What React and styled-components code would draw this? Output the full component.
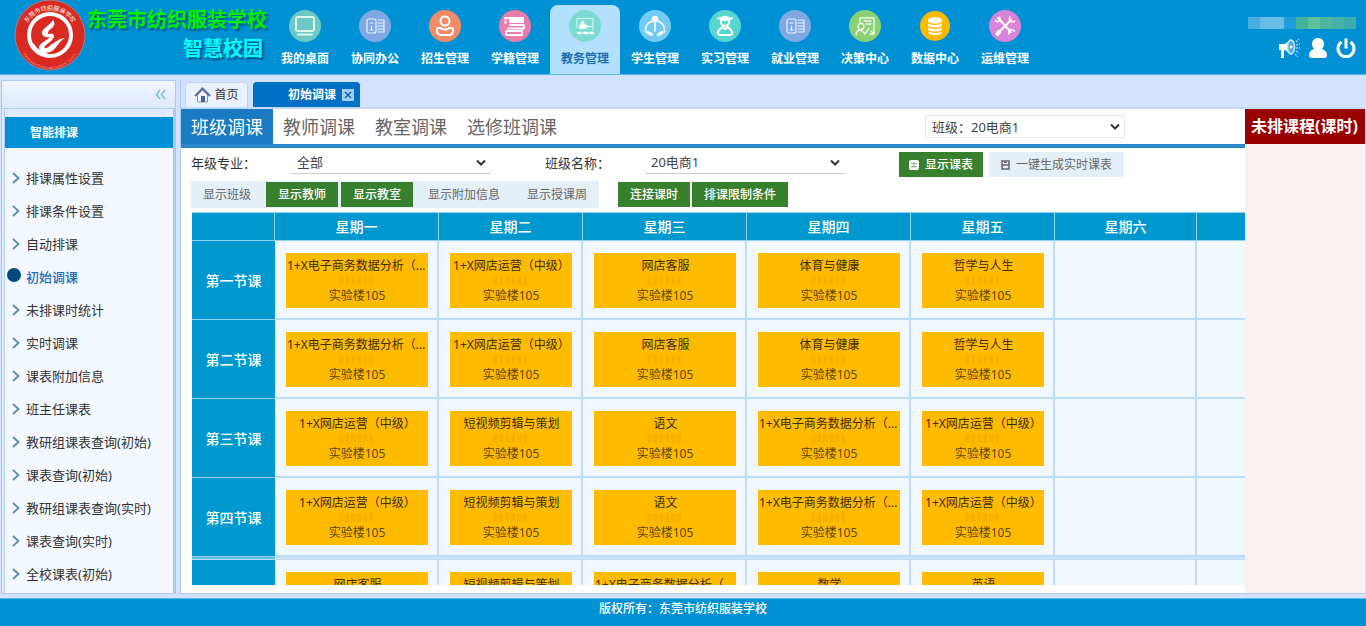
import React from 'react';
import styled, { createGlobalStyle, css } from 'styled-components';

const GlobalStyle = createGlobalStyle`
  *, *::before, *::after { box-sizing: border-box; }
  body {
    margin: 0;
    background: #d3e3ff;
    color: #333;
    font: 12px/16px "Noto Sans", "Noto Sans CJK SC", sans-serif;
  }
  button, select { font: inherit; color: inherit; margin: 0; }
  a { color: inherit; text-decoration: none; }
  ul { list-style: none; margin: 0; padding: 0; }
`;

const Shell = styled.div`
  display: flex;
  flex-direction: column;
  height: 100vh;
  overflow: hidden;
`;

/* Header */

const Header = styled.header`
  display: flex;
  flex: none;
  height: 75px;
  background: #0091d5;
  border-bottom: 1px solid #5cb8ea;
  color: #fff;
`;

const Brand = styled.div`
  display: flex;
  flex: none;
  width: 270px;
  padding-left: 14px;
`;

const BrandText = styled.div`
  display: flex;
  flex-direction: column;
  align-items: flex-end;
  margin-left: 1px;
  padding-top: 5px;
  font-size: 20px;
  line-height: 29px;
  white-space: nowrap;
  text-shadow: 2px 2px 2px rgba(0, 40, 80, 0.6);
`;

const SchoolName = styled.strong`
  color: #00f000;
`;

const SystemName = styled.strong`
  margin-right: 4px;
  color: #0ff;
`;

const Nav = styled.nav`
  display: flex;
  flex: 1;
  padding-top: 5px;
`;

const NavItem = styled.a`
  display: flex;
  flex: none;
  flex-direction: column;
  align-items: center;
  width: 70px;
  padding-top: 5px;
  border-radius: 8px 8px 0 0;
  background: ${(p) => (p.$active ? '#b3e0ff' : 'transparent')};
  color: ${(p) => (p.$active ? '#1c6cb0' : '#fff')};
  font-weight: bold;

  span { margin-top: 9px; }
`;

const UserArea = styled.div`
  display: flex;
  flex: none;
  flex-direction: column;
  align-items: flex-end;
  gap: 8px;
  padding: 17px 10px 0 0;
`;

const UserMask = styled.div`
  width: 108px;
  height: 12px;
  background: linear-gradient(90deg, #48b0e0 0 12px, #68bce6 12px 36px, #229cda 36px 48px, #45b39c 48px 60px, #60c29a 60px 72px, #50b79d 72px 84px, #46b1a5 84px 96px, #3eacae 96px);
`;

const UserActions = styled.div`
  display: flex;
  gap: 8px;
`;

const IconButton = styled.button`
  display: block;
  padding: 0;
  border: 0;
  background: none;
  color: #fff;
  cursor: pointer;

  svg { display: block; }
`;

/* Body */

const Body = styled.div`
  display: flex;
  flex: 1;
  gap: 4px;
  min-height: 0;
  padding: 5px 1px 4px;
`;

const Sidebar = styled.aside`
  display: flex;
  flex: none;
  flex-direction: column;
  width: 175px;
  border: 1px solid #a9c8f2;
  background: #e0ebff;
`;

const SidebarTop = styled.div`
  display: flex;
  flex: none;
  align-items: center;
  justify-content: flex-end;
  height: 28px;
  padding-right: 9px;
  border-bottom: 1px solid #a9c8f2;
  background: linear-gradient(#f0f5ff, #deeaff);
  color: #7cbcec;
`;

const SidebarPanel = styled.div`
  flex: 1;
  min-height: 0;
  margin: 0 0 0 2px;
  padding-top: 8px;
  border-left: 1px solid #b7d0f3;
  border-right: 2px solid #b0caef;
  overflow: hidden;
  display: flex;
  flex-direction: column;
`;

const MenuTitle = styled.h2`
  flex: none;
  margin: 0;
  padding-left: 25px;
  background: #0091d5;
  color: #fff;
  font-size: 12px;
  line-height: 31px;
`;

const Menu = styled.ul`
  flex: 1;
  && { padding-top: 13px; }
  background: #f3f8ff;
`;

const MenuLink = styled.a`
  display: flex;
  align-items: center;
  height: 33px;
  font-size: 13px;
  white-space: nowrap;
  color: ${(p) => (p.$active ? '#1c6cb8' : '#333')};
  font-weight: ${(p) => (p.$active ? 500 : 400)};
`;

const MenuMark = styled.span`
  display: flex;
  flex: none;
  justify-content: center;
  width: 21px;
  color: #5b8ba5;
`;

const Dot = styled.i`
  width: 14px;
  height: 14px;
  margin: 0 4px 3px 0;
  border-radius: 50%;
  background: #004a80;
`;

const Main = styled.main`
  display: flex;
  flex: 1;
  flex-direction: column;
  min-width: 0;
  border-left: 1px solid #a9c8f2;
`;

const PageTabs = styled.div`
  display: flex;
  flex: none;
  gap: 5px;
  height: 29px;
  padding: 2px 0 0 4px;
  border-bottom: 2px solid #c2daf8;
`;

const PageTab = styled.div`
  display: flex;
  align-items: center;
  justify-content: ${(p) => (p.$active ? 'flex-end' : 'center')};
  gap: ${(p) => (p.$active ? 6 : 3)}px;
  width: ${(p) => (p.$active ? 107 : 63)}px;
  padding-right: ${(p) => (p.$active ? 5 : 0)}px;
  border-radius: 4px 4px 0 0;
  background: ${(p) => (p.$active ? '#0070c4' : '#ebf2ff')};
  border: 1px solid ${(p) => (p.$active ? '#0070c4' : '#bdd4f5')};
  border-bottom: 0;
  color: ${(p) => (p.$active ? '#fff' : '#333')};
  font-weight: ${(p) => (p.$active ? 700 : 400)};
`;

const Content = styled.div`
  display: flex;
  flex: 1;
  min-height: 0;
  border-bottom: 1px solid #b0caef;
`;

const Workspace = styled.section`
  display: flex;
  flex: 1;
  flex-direction: column;
  min-width: 0;
  padding-bottom: 8px;
  background: #fff;
`;

const ModeBar = styled.div`
  display: flex;
  flex: none;
  align-items: center;
  height: 39px;
  border-bottom: 4px solid #2b87c8;
`;

const ModeTab = styled.button`
  align-self: stretch;
  padding: 0 10px;
  border: 0;
  background: ${(p) => (p.$active ? '#1a7ac2' : 'none')};
  color: ${(p) => (p.$active ? '#fff' : '#666')};
  font-size: 18px;
  cursor: pointer;
`;

const SelectBox = styled.div`
  position: relative;
  width: 200px;
  color: #444;
  font-size: 13px;

  svg {
    position: absolute;
    top: 8px;
    right: 5px;
    pointer-events: none;
  }
`;

const Select = styled.select`
  display: block;
  width: 100%;
  height: 23px;
  padding: 0 24px 0 6px;
  border: 1px solid #dfeaf3;
  border-radius: 0;
  background: transparent;
  appearance: none;

  ${(p) => p.$underline && css`
    border-width: 0 0 1px;
    border-color: #ccc;
  `}
`;

const ClassPicker = styled.div`
  margin: 0 120px 0 auto;
`;

const Filters = styled.div`
  display: flex;
  flex: none;
  align-items: flex-start;
  margin-top: 3px;
  padding-left: 10px;
`;

const Field = styled.div`
  display: flex;
  align-items: center;
  margin-right: 54px;

  label {
    width: 100px;
    font-size: 13px;
  }
`;

const ButtonGroup = styled.div`
  display: flex;
  gap: ${(p) => p.$gap || 0}px;
  padding: 1px 0;
  background: ${(p) => (p.$tinted ? '#e4eff8' : 'none')};
`;

const Button = styled.button`
  display: flex;
  align-items: center;
  justify-content: center;
  gap: 6px;
  height: 25px;
  padding: 0 ${(p) => p.$pad || 12}px;
  border: 0;
  background: ${(p) => (p.$on ? '#37802e' : '#e4eff8')};
  color: ${(p) => (p.$on ? '#fff' : '#666')};
  font-weight: ${(p) => (p.$on ? 500 : 400)};
  white-space: nowrap;
  cursor: pointer;
`;

const Options = styled(Filters)`
  gap: 19px;
`;

const TableScroll = styled.div`
  flex: 1;
  min-height: 0;
  margin: 4px 0 0 11px;
  overflow: hidden;
`;

const Timetable = styled.table`
  width: 1147px;
  table-layout: fixed;
  border-spacing: 0;

  th, td { padding: 0; }
`;

const DayHead = styled.th`
  height: 29px;
  border: solid #8fd3f0;
  border-width: 1px 1px 1px 0;
  background: #0099cf;
  color: #fff;
  font-size: 14px;
  font-weight: 500;
`;

const PeriodHead = styled.th`
  && { padding-top: 2px; }
  height: 79px;
  border-bottom: 1px solid #8fd3f0;
  background: #0099cf;
  color: #fff;
  font-size: 14px;
  font-weight: 500;
`;

const Slot = styled.td`
  && { padding: 12px 9px 10px 11px; }
  height: 79px;
  border-right: 2px solid #bcdcf6;
  border-bottom: 2px solid #bcdcf6;
  background: #f0f7ff;
  vertical-align: top;
`;

const BreakCell = styled.td`
  height: 3px;
  border-bottom: 1px solid #bcdcf6;
  background: ${(p) => (p.$head ? '#5fc0e6' : '#cfe4f9')};
`;

const Lesson = styled.div`
  display: flex;
  flex-direction: column;
  align-items: center;
  height: 55px;
  padding: 5px 0;
  background: #fb0;
  line-height: 15px;
`;

const LessonName = styled.div`
  max-width: 100%;
  padding-left: 1px;
  overflow: hidden;
  color: #3c2d00;
  text-overflow: ellipsis;
  white-space: nowrap;
`;

const TeacherMask = styled.div`
  width: 36px;
  height: 9px;
  margin: 3px 0;
  opacity: 0.4;
  background: repeating-linear-gradient(90deg, #eda900 0 4px, #fab600 4px 7px, #e5a400 7px 10px, #fb0 10px 12px);
`;

const Room = styled.div`
  color: #5c4600;
`;

const Unscheduled = styled.section`
  flex: none;
  width: 120px;
  background: #f9f0f0;

  h2 {
    height: 35px;
    margin: 0;
    padding: 0 6px;
    background: #900;
    color: #fff;
    font-size: 16px;
    line-height: 35px;
    white-space: nowrap;
  }
`;

const Footer = styled.footer`
  flex: none;
  height: 28px;
  background: #0091d5;
  border-top: 1px solid #5cb8ea;
  color: #fff;
  font-weight: 500;
  line-height: 19px;
  text-align: center;
`;

/* Drawings */

const Logo = () => (
  <svg width="72" height="72" viewBox="0 0 72 72" role="img" aria-label="校徽">
    <defs>
      <path id="ringTop" d="M10 36a26 26 0 0 1 52 0" />
      <path id="ringBottom" d="M5 38a31 31 0 0 0 62 0" />
    </defs>
    <circle cx="36" cy="35" r="35" fill="#d92a22" stroke="#a8808c" strokeWidth="1" />
    <circle cx="36" cy="35" r="21" fill="#d92a22" stroke="#fff" strokeWidth="4" />
    <text fill="#fff" fontSize="6">
      <textPath href="#ringTop" startOffset="50%" textAnchor="middle">东莞市纺织服装学校</textPath>
    </text>
    <text fill="#f3a9a0" fontSize="3">
      <textPath href="#ringBottom" startOffset="50%" textAnchor="middle">DONGGUAN TEXTILE AND GARMENT SCHOOL</textPath>
    </text>
    <path fill="#fff" d="M39 20c-3 5-10 8-11 12-1 4 4 6 8 5-4 4-11 6-11 11 0 5 9 6 13 3 5-3 5-8 13-13-5 0-9 4-13 6-3 2-5 5-7 4-2-2 3-4 6-7 3-3 4-5 2-7-2-1-5 1-5-1 0-4 10-6 5-13z" />
    <path fill="none" stroke="#fff" strokeWidth="2" d="M19 44c3 6 8 9 14 10" />
  </svg>
);

const stroke = { fill: 'none', stroke: '#fff', strokeWidth: 1.6, strokeLinecap: 'round', strokeLinejoin: 'round' };

const Newspaper = (
  <g {...stroke} strokeWidth="1.2" opacity="0.85">
    <rect x="8" y="9" width="9" height="14" rx="2" />
    <path d="M11 13h3M12.500 16v4M11 20h3M19 10h6v12h-6M19 13h6M19 16h6M19 19h6" />
  </g>
);

const navIcons = {
  desktop: (
    <g {...stroke} stroke="#d9fbef" strokeWidth="2">
      <rect x="7" y="7" width="18" height="14" rx="2" />
      <path d="M9 24.500h14" />
    </g>
  ),
  news: Newspaper,
  recruit: (
    <g {...stroke} strokeWidth="2">
      <circle cx="16" cy="11" r="4.500" />
      <path d="M9 18h2.500c2 2 7 2 9 0H23c2 0 1 7-2 7H11c-3 0-4-7-2-7z" />
    </g>
  ),
  books: (
    <g {...stroke} strokeWidth="1.800">
      <path d="M11 8h13v4H11z" fill="#fff" />
      <path d="M6 8h5M6.500 8v5M11 15h14M9 18.500h16M25 15v3.500M7 21h16v4H7M7 21v4" />
    </g>
  ),
  teach: (
    <g {...stroke} strokeWidth="1.200">
      <path d="M8 18V8.500h16V20" opacity="0.6" />
      <path d="M13.500 11c-1 3-3 4-3 7.500h6c0-3.500-2-4.500-3-7.500z" fill="#fff" />
      <path d="M17 15l2 2 4-1" />
      <path d="M9 23h3M15 23h3M21 23h3" strokeWidth="2.500" />
    </g>
  ),
  student: (
    <g {...stroke}>
      <circle cx="16" cy="9" r="2.500" fill="#fff" />
      <path d="M16 12v9M13 11c-5 2-7 6-6.500 11M19 11c5 2 7 6 6.500 11" />
      <path d="M9 22.500l3.500 2M23 22.500l-3.500 2" strokeWidth="3" />
    </g>
  ),
  graduate: (
    <g {...stroke}>
      <path d="M9 8.500l7-2 7 2-7 2z" fill="#fff" />
      <path d="M12 10v2c0 5 8 5 8 0v-2M13 17l3 2 3-2" strokeWidth="2" />
      <path d="M13 18c-4 1-6 7-2 7h10c4 0 2-6-2-7" strokeWidth="2" />
    </g>
  ),
  decision: (
    <g {...stroke} strokeWidth="1.300" opacity="0.9">
      <path d="M11 12V8h14v16h-4M15 11h7M17 14h5M25 24l-3-3" />
      <circle cx="12" cy="16.500" r="3" />
      <path d="M7 25c0-3 2-5 5-5l4 4 4-6" />
    </g>
  ),
  data: (
    <g>
      <path fill="#fff" d="M9 10v12c0 4 14 4 14 0V10z" />
      <ellipse cx="16" cy="10" rx="7" ry="2.800" fill="#fff" />
      <path fill="none" stroke="#fcb900" strokeWidth="1.300" d="M9 12c1 3 13 3 14 0M9 16c1 3 13 3 14 0M9 20c1 3 13 3 14 0" />
    </g>
  ),
  tools: (
    <g {...stroke} strokeWidth="2">
      <path d="M9 8l13 14M22 10L10 22" />
      <path d="M10 22l-1.500 2" strokeWidth="4" />
      <path d="M6.500 10.500c2 3 6 0 4-3.500M21 7c-2 3 2 7 4.500 4M20 24c-1-3 3-6 5.500-3" strokeWidth="1.500" />
    </g>
  ),
};

const NavIcon = ({ name, color }) => (
  <svg width="32" height="32" viewBox="0 0 32 32" aria-hidden="true">
    <circle cx="16" cy="16" r={name === 'data' ? 15 : 16} fill={color} />
    {navIcons[name]}
  </svg>
);

const Caret = () => (
  <svg width="10" height="8" viewBox="0 0 10 8" aria-hidden="true">
    <path d="M1 1.500l4 4 4-4" fill="none" stroke="#333" strokeWidth="2" />
  </svg>
);

const MenuArrow = () => (
  <svg width="8" height="12" viewBox="0 0 8 12" aria-hidden="true">
    <path d="M1 1l5.500 5L1 11" fill="none" stroke="currentColor" strokeWidth="1.800" />
  </svg>
);

/* Data */

const modules = [
  ['我的桌面', 'desktop', '#6cc8c4'],
  ['协同办公', 'news', '#80a9e4'],
  ['招生管理', 'recruit', '#f58b66'],
  ['学籍管理', 'books', '#ea7bad'],
  ['教务管理', 'teach', '#7bdbd3'],
  ['学生管理', 'student', '#73cbf5'],
  ['实习管理', 'graduate', '#58d5cf'],
  ['就业管理', 'news', '#80a9e4'],
  ['决策中心', 'decision', '#8bd174'],
  ['数据中心', 'data', '#fcb900'],
  ['运维管理', 'tools', '#d884d8'],
];

const menu = [
  '排课属性设置', '排课条件设置', '自动排课', '初始调课', '未排课时统计', '实时调课', '课表附加信息',
  '班主任课表', '教研组课表查询(初始)', '课表查询(初始)', '教研组课表查询(实时)', '课表查询(实时)', '全校课表(初始)',
];

const days = ['星期一', '星期二', '星期三', '星期四', '星期五', '星期六', ''];
const columnWidths = [83, 164, 144, 164, 164, 144, 142, 142];

const ecommerce = '1+X电子商务数据分析（中级）';
const shop = '1+X网店运营（中级）';
const video = '短视频剪辑与策划';
const room = '实验楼105';

const periods = [
  ['第一节课', [ecommerce, shop, '网店客服', '体育与健康', '哲学与人生'], room],
  ['第二节课', [ecommerce, shop, '网店客服', '体育与健康', '哲学与人生'], room],
  ['第三节课', [shop, video, '语文', ecommerce, shop], room],
  ['第四节课', [shop, video, '语文', ecommerce, shop], room],
  ['', ['网店客服', video, ecommerce, '数学', '英语']],
];

const toggles = [
  ['显示班级', false], ['显示教师', true], ['显示教室', true], ['显示附加信息', false], ['显示授课周', false],
];

const PeriodRow = ({ period: [label, lessons, place] }) => (
  <tr>
    <PeriodHead scope="row">{label}</PeriodHead>
    {days.map((day, i) => (
      <Slot key={i}>
        {lessons[i] && (
          <Lesson>
            <LessonName>{lessons[i]}</LessonName>
            <TeacherMask />
            {place && <Room>{place}</Room>}
          </Lesson>
        )}
      </Slot>
    ))}
  </tr>
);

export default function App() {
  return (
    <Shell>
      <GlobalStyle />
      <Header>
        <Brand>
          <Logo />
          <BrandText>
            <SchoolName>东莞市纺织服装学校</SchoolName>
            <SystemName>智慧校园</SystemName>
          </BrandText>
        </Brand>
        <Nav>
          {modules.map(([label, icon, color]) => (
            <NavItem key={label} href="#" $active={label === '教务管理'}>
              <NavIcon name={icon} color={color} />
              <span>{label}</span>
            </NavItem>
          ))}
        </Nav>
        <UserArea>
          <UserMask />
          <UserActions>
            <IconButton aria-label="公告">
              <svg width="22" height="22" viewBox="0 0 22 22">
                <path fill="currentColor" d="M1 7h6l6-5v16l-6-5H6v8H3v-8H1z" />
                <ellipse cx="13" cy="10" rx="3.500" ry="7" fill="#4cb2e2" stroke="#c4e6f6" strokeWidth="1.500" />
                <circle cx="13" cy="10" r="1.500" fill="currentColor" />
                <path stroke="#8fd0ef" strokeWidth="1.500" strokeDasharray="2 1" d="M18 5l3-3M18 8l4-1M18 11h4M18 14l3 2M17 17l3 3" />
              </svg>
            </IconButton>
            <IconButton aria-label="用户">
              <svg width="20" height="22" viewBox="0 0 20 22">
                <path fill="currentColor" d="M10 1c4 0 6 3 6 6 0 2-1 4-2 5 3 1 5 3 5 6 0 2-1 3-3 3H4c-2 0-3-1-3-3 0-3 2-5 5-6-1-1-2-3-2-5 0-3 2-6 6-6z" />
              </svg>
            </IconButton>
            <IconButton aria-label="退出">
              <svg width="20" height="22" viewBox="0 0 20 22">
                <path fill="none" stroke="currentColor" strokeWidth="3" d="M5.500 5a8 8 0 1 0 9 0M10 1.500v10" />
              </svg>
            </IconButton>
          </UserActions>
        </UserArea>
      </Header>

      <Body>
        <Sidebar>
          <SidebarTop>
            <IconButton aria-label="收起菜单">
              <svg width="11" height="11" viewBox="0 0 11 11">
                <path d="M5 1L1.500 5.500 5 10M10 1L6.500 5.500 10 10" fill="none" stroke="#7cbcec" strokeWidth="1.600" />
              </svg>
            </IconButton>
          </SidebarTop>
          <SidebarPanel>
            <MenuTitle>智能排课</MenuTitle>
            <Menu>
              {menu.map((item) => {
                const active = item === '初始调课';
                return (
                  <li key={item}>
                    <MenuLink href="#" $active={active}>
                      <MenuMark>{active ? <Dot /> : <MenuArrow />}</MenuMark>
                      {item}
                    </MenuLink>
                  </li>
                );
              })}
            </Menu>
          </SidebarPanel>
        </Sidebar>

        <Main>
          <PageTabs>
            <PageTab>
              <svg width="17" height="16" viewBox="0 0 17 16" aria-hidden="true">
                <path fill="#f4f6fa" stroke="#8b93a8" d="M3.500 8v7h10V8l-5-5z" />
                <path fill="none" stroke="#5b6f9c" strokeWidth="2" d="M1 9l7.500-7.500L16 9" />
                <path fill="#3f62a8" d="M7 9h4v6H7z" />
              </svg>
              首页
            </PageTab>
            <PageTab $active>
              初始调课
              <IconButton aria-label="关闭">
                <svg width="12" height="12" viewBox="0 0 12 12">
                  <path fill="#a9cdee" d="M0 0h12v12H0z" />
                  <path fill="none" stroke="#0e62ad" strokeWidth="1.500" d="M3 3l6 6M9 3L3 9" />
                </svg>
              </IconButton>
            </PageTab>
          </PageTabs>

          <Content>
            <Workspace>
              <ModeBar>
                <ModeTab $active>班级调课</ModeTab>
                <ModeTab>教师调课</ModeTab>
                <ModeTab>教室调课</ModeTab>
                <ModeTab>选修班调课</ModeTab>
                <ClassPicker>
                  <SelectBox>
                    <Select aria-label="班级">
                      <option>班级：20电商1</option>
                    </Select>
                    <Caret />
                  </SelectBox>
                </ClassPicker>
              </ModeBar>

              <Filters>
                <Field>
                  <label htmlFor="major">年级专业：</label>
                  <SelectBox>
                    <Select id="major" $underline>
                      <option>全部</option>
                    </Select>
                    <Caret />
                  </SelectBox>
                </Field>
                <Field>
                  <label htmlFor="className">班级名称：</label>
                  <SelectBox>
                    <Select id="className" $underline>
                      <option>20电商1</option>
                    </Select>
                    <Caret />
                  </SelectBox>
                </Field>
                <ButtonGroup $gap={6}>
                  <Button $on $pad={10}>
                    <svg width="10" height="10" viewBox="0 0 10 10" aria-hidden="true">
                      <rect width="10" height="10" rx="2" fill="#fff" />
                      <path stroke="#8fb98a" d="M2 3.500h6M2 6.500h6M5 2v6" />
                    </svg>
                    显示课表
                  </Button>
                  <Button $pad={12}>
                    <svg width="9" height="10" viewBox="0 0 9 10" aria-hidden="true">
                      <path fill="none" stroke="#666" strokeWidth="1.500" d="M1 1h7v8H1zM1 5h7" />
                      <path stroke="#666" d="M3 2.500h3" />
                    </svg>
                    一键生成实时课表
                  </Button>
                </ButtonGroup>
              </Filters>

              <Options>
                <ButtonGroup $tinted $gap={3}>
                  {toggles.map(([label, on]) => (
                    <Button key={label} $on={on}>{label}</Button>
                  ))}
                </ButtonGroup>
                <ButtonGroup $gap={2}>
                  <Button $on>连接课时</Button>
                  <Button $on>排课限制条件</Button>
                </ButtonGroup>
              </Options>

              <TableScroll>
                <Timetable>
                  <colgroup>
                    {columnWidths.map((width, i) => <col key={i} width={width} />)}
                  </colgroup>
                  <thead>
                    <tr>
                      <DayHead as="td" />
                      {days.map((day, i) => <DayHead key={i} scope="col">{day}</DayHead>)}
                    </tr>
                  </thead>
                  <tbody>
                    {periods.slice(0, 4).map((period, i) => <PeriodRow key={i} period={period} />)}
                    <tr>
                      <BreakCell $head />
                      <BreakCell colSpan={7} />
                    </tr>
                    {periods.slice(4).map((period, i) => <PeriodRow key={i} period={period} />)}
                  </tbody>
                </Timetable>
              </TableScroll>
            </Workspace>

            <Unscheduled>
              <h2>未排课程(课时)</h2>
            </Unscheduled>
          </Content>
        </Main>
      </Body>

      <Footer>版权所有：东莞市纺织服装学校</Footer>
    </Shell>
  );
}
